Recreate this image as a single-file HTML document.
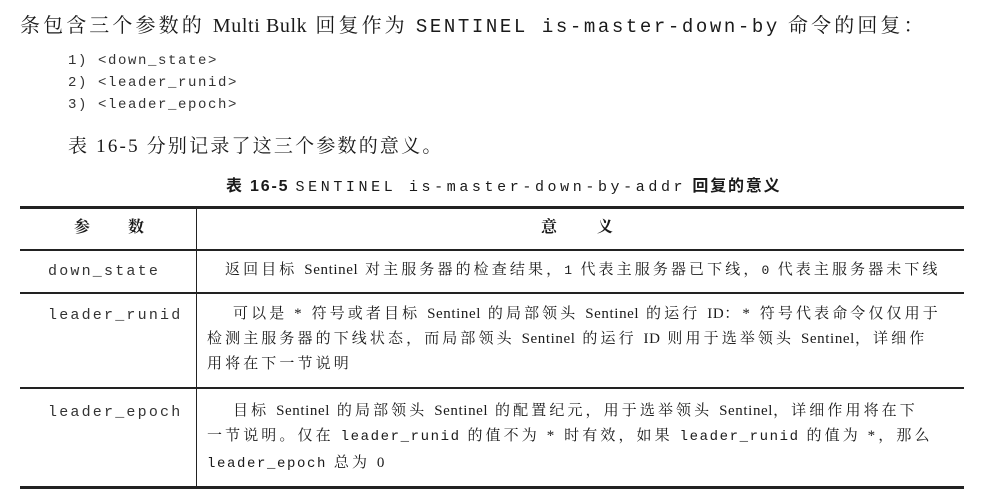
<!DOCTYPE html>
<html><head><meta charset="utf-8"><style>
body{margin:0;width:999px;height:503px;background:#fff;position:relative;overflow:hidden;color:#1a1a1a;font-family:"Liberation Serif","Noto Serif CJK SC",serif}
.a{position:absolute;white-space:nowrap;line-height:1}
.m{font-family:"Liberation Mono","Noto Sans CJK SC",monospace}
.h{position:absolute;background:#222}
.c{font-size:15px;letter-spacing:3.1px}
.c .m{letter-spacing:1.6px}
.l{letter-spacing:0.6px}
</style></head><body>
<div class="a" style="left:20px;top:16px;font-size:20px;letter-spacing:3.1px">条包含三个参数的 <span class="l">Multi Bulk</span> 回复作为 <span class="m" style="font-size:19px;letter-spacing:2.6px">SENTINEL is-master-down-by</span> 命令的回复：</div>
<div class="a m" style="left:68px;top:54px;font-size:14px;color:#333;letter-spacing:1.6px">1) &lt;down_state&gt;</div>
<div class="a m" style="left:68px;top:76px;font-size:14px;color:#333;letter-spacing:1.6px">2) &lt;leader_runid&gt;</div>
<div class="a m" style="left:68px;top:98px;font-size:14px;color:#333;letter-spacing:1.6px">3) &lt;leader_epoch&gt;</div>
<div class="a" style="left:68px;top:137px;font-size:19px;letter-spacing:2.2px">表 16-5 分别记录了这三个参数的意义。</div>
<div class="a" style="left:226px;top:179px;font-size:16px;font-weight:bold;letter-spacing:1.8px;font-family:'Liberation Sans','Noto Sans CJK SC',sans-serif">表 16-5 <span class="m" style="font-weight:normal;font-size:15px;letter-spacing:3.6px">SENTINEL is-master-down-by-addr</span> 回复的意义</div>
<div class="h" style="left:20px;top:206px;width:944px;height:3px"></div>
<div class="h" style="left:20px;top:249px;width:944px;height:2px"></div>
<div class="h" style="left:20px;top:292px;width:944px;height:2px"></div>
<div class="h" style="left:20px;top:387px;width:944px;height:2px"></div>
<div class="h" style="left:20px;top:486px;width:944px;height:3px"></div>
<div class="h" style="left:196px;top:207px;width:1px;height:280px"></div>
<div class="a" style="left:74px;top:220px;font-size:16px;font-weight:bold">参</div>
<div class="a" style="left:128px;top:220px;font-size:16px;font-weight:bold">数</div>
<div class="a" style="left:541px;top:220px;font-size:16px;font-weight:bold">意</div>
<div class="a" style="left:597px;top:220px;font-size:16px;font-weight:bold">义</div>
<div class="a m" style="left:48px;top:264px;font-size:15px;color:#333;letter-spacing:2.2px">down_state</div>
<div class="a m" style="left:48px;top:308px;font-size:15px;color:#333;letter-spacing:2.2px">leader_runid</div>
<div class="a m" style="left:48px;top:405px;font-size:15px;color:#333;letter-spacing:2.2px">leader_epoch</div>
<div class="a c" style="left:225px;top:263px">返回目标 <span class="l">Sentinel</span> 对主服务器的检查结果，<span class="m" style="font-size:13px">1</span> 代表主服务器已下线，<span class="m" style="font-size:13px">0</span> 代表主服务器未下线</div>
<div class="a c" style="left:233px;top:307px">可以是 * 符号或者目标 <span class="l">Sentinel</span> 的局部领头 <span class="l">Sentinel</span> 的运行 <span class="l">ID</span>：* 符号代表命令仅仅用于</div>
<div class="a c" style="left:207px;top:332px">检测主服务器的下线状态，而局部领头 <span class="l">Sentinel</span> 的运行 <span class="l">ID</span> 则用于选举领头 <span class="l">Sentinel</span>，详细作</div>
<div class="a c" style="left:207px;top:357px">用将在下一节说明</div>
<div class="a c" style="left:233px;top:404px">目标 <span class="l">Sentinel</span> 的局部领头 <span class="l">Sentinel</span> 的配置纪元，用于选举领头 <span class="l">Sentinel</span>，详细作用将在下</div>
<div class="a c" style="left:207px;top:429px">一节说明。仅在 <span class="m" style="font-size:14px">leader_runid</span> 的值不为 * 时有效，如果 <span class="m" style="font-size:14px">leader_runid</span> 的值为 *，那么</div>
<div class="a c" style="left:207px;top:456px"><span class="m" style="font-size:14px">leader_epoch</span> 总为 0</div>
</body></html>
